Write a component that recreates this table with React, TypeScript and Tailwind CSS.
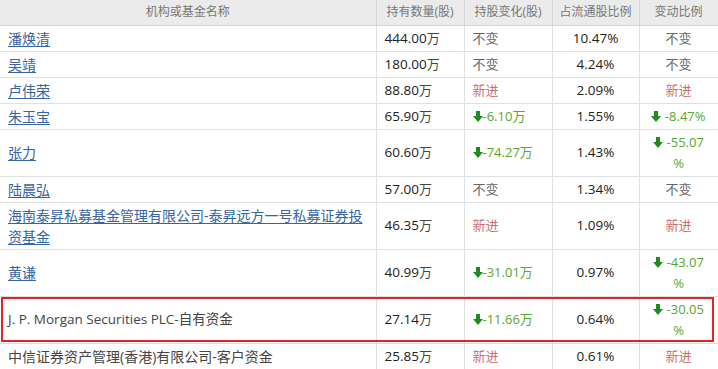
import React from "react";

type Change =
  | { kind: "same" }
  | { kind: "new" }
  | { kind: "down"; value: string; wrap?: boolean };

type Row = {
  name: string;
  name2?: string;
  link: boolean;
  hold: string;
  delta: Change;
  ratio: string;
  pct: Change;
  tall?: boolean;
  latin?: boolean;
};

const rows: Row[] = [
  { name: "潘焕清", link: true, hold: "444.00", delta: { kind: "same" }, ratio: "10.47%", pct: { kind: "same" } },
  { name: "吴靖", link: true, hold: "180.00", delta: { kind: "same" }, ratio: "4.24%", pct: { kind: "same" } },
  { name: "卢伟荣", link: true, hold: "88.80", delta: { kind: "new" }, ratio: "2.09%", pct: { kind: "new" } },
  { name: "朱玉宝", link: true, hold: "65.90", delta: { kind: "down", value: "-6.10万" }, ratio: "1.55%", pct: { kind: "down", value: "-8.47%" } },
  { name: "张力", link: true, hold: "60.60", delta: { kind: "down", value: "-74.27万" }, ratio: "1.43%", pct: { kind: "down", value: "-55.07", wrap: true }, tall: true },
  { name: "陆晨弘", link: true, hold: "57.00", delta: { kind: "same" }, ratio: "1.34%", pct: { kind: "same" } },
  { name: "海南泰昇私募基金管理有限公司-泰昇远方一号私募证券投", name2: "资基金", link: true, hold: "46.35", delta: { kind: "new" }, ratio: "1.09%", pct: { kind: "new" }, tall: true },
  { name: "黄谦", link: true, hold: "40.99", delta: { kind: "down", value: "-31.01万" }, ratio: "0.97%", pct: { kind: "down", value: "-43.07", wrap: true }, tall: true },
  { name: "J. P. Morgan Securities PLC-自有资金", link: false, latin: true, hold: "27.14", delta: { kind: "down", value: "-11.66万" }, ratio: "0.64%", pct: { kind: "down", value: "-30.05", wrap: true }, tall: true },
  { name: "中信证券资产管理(香港)有限公司-客户资金", link: false, hold: "25.85", delta: { kind: "new" }, ratio: "0.61%", pct: { kind: "new" } },
];

function DownArrow() {
  return (
    <svg width="10" height="11" viewBox="0 0 10 11" className="inline-block align-[-1px]">
      <rect x="3" y="0" width="4" height="6" fill="#1f8a1f" />
      <polygon points="0,5 10,5 5,11" fill="#1f8a1f" />
    </svg>
  );
}

function ChangeCell({ c, spaced }: { c: Change; spaced?: boolean }) {
  if (c.kind === "same") return <span className="text-[#666]">不变</span>;
  if (c.kind === "new") return <span className="text-[#c8706f]">新进</span>;
  if (c.wrap)
    return (
      <span className="text-[#58a82e]">
        <DownArrow /> {c.value}
        <br />%
      </span>
    );
  return (
    <span className="text-[#58a82e]">
      <DownArrow />
      {spaced ? " " : ""}
      {c.value}
    </span>
  );
}

export default function App() {
  const head = "h-[25px] bg-[#ebebeb] border-r border-b border-[#d6d6d6] text-[12px] text-[#777] font-normal text-center";
  const cell = "border-r border-b border-[#e0e0e0] py-[2px] leading-[21px]";
  return (
    <div className="relative w-[718px] h-[369px] overflow-hidden bg-white" style={{ fontFamily: '"Open Sans", "Noto Sans CJK SC", sans-serif' }}>
      <table className="w-[718px] border-collapse table-fixed text-[13px] text-[#222]">
        <colgroup>
          <col className="w-[376px]" />
          <col className="w-[88px]" />
          <col className="w-[88px]" />
          <col className="w-[87px]" />
          <col className="w-[79px]" />
        </colgroup>
        <thead>
          <tr>
            <th className={head}>机构或基金名称</th>
            <th className={head}>持有数量(股)</th>
            <th className={head}>持股变化(股)</th>
            <th className={head}>占流通股比例</th>
            <th className={head}>变动比例</th>
          </tr>
        </thead>
        <tbody>
          {rows.map((r) => (
            <tr key={r.name} className={r.tall ? "h-[47px]" : "h-[26px]"}>
              <td className={`${cell} pl-[8px] pr-1 ${r.latin ? "text-[13.5px]" : "text-[14px]"}`}>
                {r.link ? (
                  <a href="#" className="text-[#3465a4] underline decoration-[#3465a4] underline-offset-2">
                    {r.name}
                    {r.name2 && (
                      <>
                        <br />
                        {r.name2}
                      </>
                    )}
                  </a>
                ) : (
                  <span className="text-[#444]">{r.name}</span>
                )}
              </td>
              <td className={`${cell} pl-[8px] text-[13.5px]`}>
                {r.hold}
                <span className="text-[#444] text-[13px]">万</span>
              </td>
              <td className={`${cell} pl-[8px]`}>
                <ChangeCell c={r.delta} />
              </td>
              <td className={`${cell} text-center text-[13.5px]`}>{r.ratio}</td>
              <td className={`${cell} text-center`}>
                <ChangeCell c={r.pct} spaced />
              </td>
            </tr>
          ))}
        </tbody>
      </table>
      <div className="absolute left-[1px] top-[297px] w-[713px] h-[45px] border-2 border-[#e3222b] pointer-events-none" />
    </div>
  );
}
